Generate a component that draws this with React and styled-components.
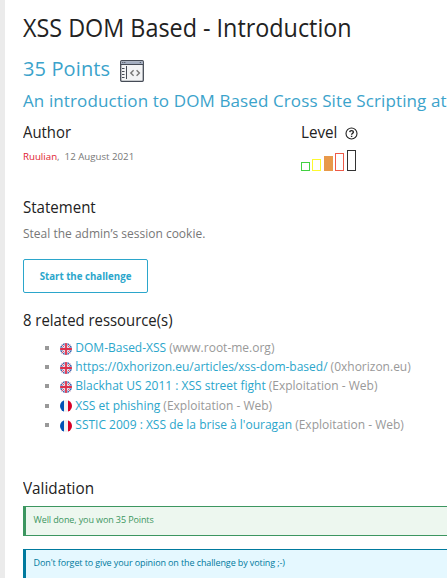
import React from "react";
import styled, { createGlobalStyle } from "styled-components";

const GlobalStyle = createGlobalStyle`
  * { box-sizing: border-box; }
  html, body { margin: 0; background: #fff; overflow: hidden; }
  body { font-family: "Open Sans", "Noto Sans", sans-serif; color: #777; }
`;

const Page = styled.main`
  width: 447px;
  height: 578px;
  overflow: hidden;
  border-left: 5px solid #ebebeb;
  padding: 10px 0 0 18px;
  white-space: nowrap;
`;

const Title = styled.h1`
  margin: 0;
  width: max-content;
  font-size: 25px;
  line-height: 34px;
  font-weight: 400;
  color: #222;
  transform: scaleX(0.934);
  transform-origin: left;
`;

const Heading = styled.h2`
  margin: 0;
  width: max-content;
  font-size: 16px;
  line-height: 24px;
  font-weight: 400;
  color: #222;
  transform: scaleX(${(p) => p.$stretch || 0.93});
  transform-origin: left;
`;

const Points = styled.div`
  display: flex;
  align-items: flex-start;
  gap: 10px;
  height: 30px;
  margin-top: 10px;
  font-size: 20px;
  line-height: 30px;
  letter-spacing: 0.12px;
  color: #3ba3cb;
  svg { margin-top: 6px; }
`;

const Intro = styled.p`
  margin: 5px 0 0;
  font-size: 17px;
  line-height: 24px;
  letter-spacing: 0.11px;
  color: #3ba3cb;
`;

const Meta = styled.section`
  display: grid;
  grid-template-columns: 278px 1fr;
  height: 75px;
  margin-top: 7px;
`;

const Byline = styled.p`
  margin: 5px 0 0;
  font-size: 9.7px;
  line-height: 16px;
  color: #777;
`;

const AuthorLink = styled.a`
  color: #e0212f;
`;

const PostDate = styled.time`
  margin-left: 5px;
`;

const LevelHead = styled.div`
  display: flex;
  height: 24px;
  gap: 6px;
  svg { margin-top: 7px; }
`;

const Bars = styled.div`
  display: flex;
  align-items: flex-end;
  height: 22px;
  margin-top: 5px;
`;

const Bar = styled.span`
  width: 9px;
  height: ${(p) => p.$height}px;
  margin-right: 2px;
  border: 1px solid ${(p) => p.$color};
  background: ${(p) => (p.$filled ? p.$color : "#fff")};
  &:nth-child(even) { margin-right: 3px; }
`;

const Statement = styled.p`
  margin: 5px 0 0;
  font-size: 12px;
  line-height: 20px;
`;

const Button = styled.button`
  display: block;
  width: 125px;
  height: 34px;
  margin: 15px 0;
  padding: 0;
  border: 1px solid #2ba6cb;
  border-radius: 2px;
  background: #fff;
  color: #2ba6cb;
  font: 700 9.7px "Open Sans", sans-serif;
`;

const Resources = styled.ul`
  height: 138px;
  margin: 6px 0 0;
  padding: 0 0 0 22px;
  list-style: none;
`;

const Resource = styled.li`
  display: flex;
  align-items: flex-start;
  height: 19.2px;
  font-size: 12px;
  line-height: 19.2px;
  color: #999;
  &::before {
    content: "";
    width: 4px;
    height: 4px;
    margin: 8px 11px 0 0;
    background: #999;
  }
  svg { margin: 4.8px 3.3px 0 0; flex: none; }
`;

const Link = styled.a`
  color: #2ba6cb;
  margin-right: 3px;
`;

const Alert = styled.div`
  height: ${(p) => p.$height}px;
  margin: 6px 0 13px;
  padding-left: 7.5px;
  border: 1px solid ${(p) => p.$line};
  border-left-width: 3px;
  border-right: 0;
  background: ${(p) => p.$fill};
  color: ${(p) => p.$line};
  font-size: 9px;
  line-height: 26px;
  letter-spacing: -0.11px;
`;

function BrowserIcon() {
  return (
    <svg width="24" height="22" viewBox="0 0 24 22" fill="none">
      <rect x=".7" y=".7" width="22.6" height="20.6" rx="1" fill="#f2f3f5" stroke="#454b56" strokeWidth="1.3" />
      <path d="M1.3 1.3h21.4v3H1.3z" fill="#a3adc0" />
      <path d="M1 4.5h22M6.5 6v13" stroke="#454b56" />
      <path d="M2.3 2.5h1m1 0h1m14.5 0h1" stroke="#454b56" />
      <path d="M2 8.5h2.5m-2.5 3h2.5m-2.5 3h2.5m-2.5 3h2.5" stroke="#454b56" />
      <path d="m13.6 10.2-2.8 2.8 2.8 2.8m3-5.6 2.8 2.8-2.8 2.8" stroke="#777" strokeWidth="1.4" />
    </svg>
  );
}

function HelpIcon() {
  return (
    <svg width="13" height="13" viewBox="0 0 13 13" fill="none" stroke="#222">
      <circle cx="6.5" cy="6.5" r="5.5" strokeWidth="1.1" />
      <path d="M4.7 5.1c.2-2.1 3.7-1.9 3.7 0 0 1.4-1.8 1.3-1.8 2.6M6.6 8.8v1.3" strokeWidth="1.4" />
    </svg>
  );
}

function BritishFlag() {
  return (
    <svg width="12" height="12" viewBox="0 0 12 12">
      <clipPath id="uk"><circle cx="6" cy="6" r="6" /></clipPath>
      <g clipPath="url(#uk)">
        <path d="M0 0h12v12H0z" fill="#2450a4" />
        <path d="m0 0 12 12M12 0 0 12" stroke="#f2edf2" strokeWidth="2.2" />
        <path d="m0 0 12 12M12 0 0 12" stroke="#df405a" strokeWidth=".9" />
        <path d="M6 0v12M0 6h12" stroke="#f2edf2" strokeWidth="3.2" />
        <path d="M6 0v12M0 6h12" stroke="#dc304c" strokeWidth="1.8" />
      </g>
    </svg>
  );
}

function FrenchFlag() {
  return (
    <svg width="12" height="12" viewBox="0 0 12 12">
      <clipPath id="fr"><circle cx="6" cy="6" r="6" /></clipPath>
      <g clipPath="url(#fr)">
        <path d="M0 0h12v12H0z" fill="#f1f1f1" />
        <path d="M0 0h4v12H0z" fill="#0052b4" />
        <path d="M8 0h4v12H8z" fill="#d80027" />
      </g>
    </svg>
  );
}

const levels = [
  { height: 9, color: "#42d142" },
  { height: 12, color: "#fdf92f" },
  { height: 15, color: "#e8994a", filled: true },
  { height: 18, color: "#ee5a48" },
  { height: 21, color: "#333" },
];

const resources = [
  { lang: "en", title: "DOM-Based-XSS", source: "www.root-me.org" },
  { lang: "en", title: "https://0xhorizon.eu/articles/xss-dom-based/", source: "0xhorizon.eu" },
  { lang: "en", title: "Blackhat US 2011 : XSS street fight", source: "Exploitation - Web" },
  { lang: "fr", title: "XSS et phishing", source: "Exploitation - Web" },
  { lang: "fr", title: "SSTIC 2009 : XSS de la brise à l'ouragan", source: "Exploitation - Web" },
];

export default function App() {
  return (
    <Page>
      <GlobalStyle />
      <Title>XSS DOM Based - Introduction</Title>
      <Points>35 Points<BrowserIcon /></Points>
      <Intro>An introduction to DOM Based Cross Site Scripting at</Intro>
      <Meta>
        <div>
          <Heading>Author</Heading>
          <Byline><AuthorLink>Ruulian</AuthorLink>,<PostDate>12 August 2021</PostDate></Byline>
        </div>
        <div>
          <LevelHead><Heading $stretch={0.95}>Level</Heading><HelpIcon /></LevelHead>
          <Bars>
            {levels.map((l) => (
              <Bar key={l.height} $height={l.height} $color={l.color} $filled={l.filled} />
            ))}
          </Bars>
        </div>
      </Meta>
      <Heading $stretch={0.94}>Statement</Heading>
      <Statement>Steal the admin’s session cookie.</Statement>
      <Button>Start the challenge</Button>
      <Heading>8 related ressource(s)</Heading>
      <Resources>
        {resources.map((r) => (
          <Resource key={r.title}>
            {r.lang === "en" ? <BritishFlag /> : <FrenchFlag />}
            <Link>{r.title}</Link>({r.source})
          </Resource>
        ))}
      </Resources>
      <Heading $stretch={0.955}>Validation</Heading>
      <Alert $height={30} $line="#3c9660" $fill="#edf7ef">Well done, you won 35 Points</Alert>
      <Alert $height={34} $line="#007a9e" $fill="#e5f8ff">Don't forget to give your opinion on the challenge by voting ;-)</Alert>
    </Page>
  );
}
